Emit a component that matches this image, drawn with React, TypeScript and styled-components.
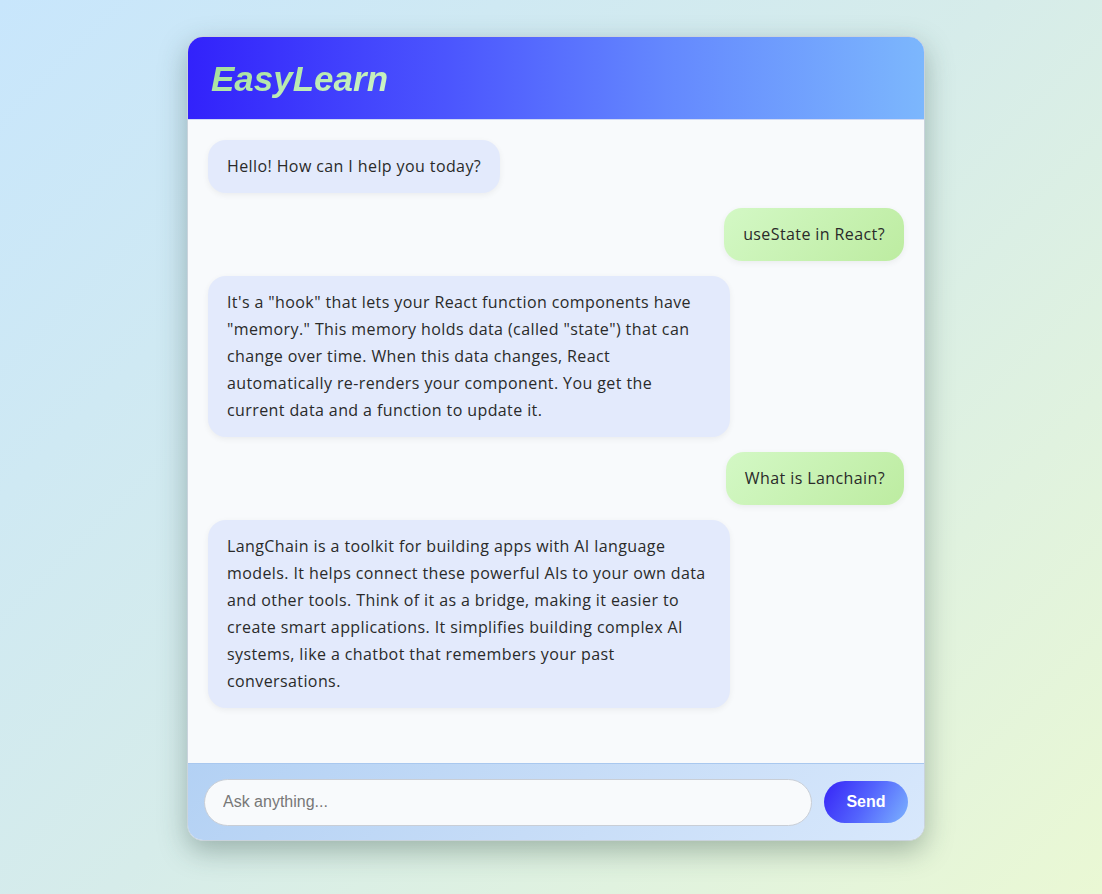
import React from 'react'
import styled, { createGlobalStyle } from 'styled-components'

type Message = { from: 'bot' | 'user'; text: string }

const messages: Message[] = [
    { from: 'bot', text: 'Hello! How can I help you today?' },
    { from: 'user', text: 'useState in React?' },
    {
        from: 'bot',
        text: 'It\'s a "hook" that lets your React function components have "memory." This memory holds data (called "state") that can change over time. When this data changes, React automatically re-renders your component. You get the current data and a function to update it.',
    },
    { from: 'user', text: 'What is Lanchain?' },
    {
        from: 'bot',
        text: 'LangChain is a toolkit for building apps with AI language models. It helps connect these powerful AIs to your own data and other tools. Think of it as a bridge, making it easier to create smart applications. It simplifies building complex AI systems, like a chatbot that remembers your past conversations.',
    },
]

const App: React.FC = () => {
    return (
        <>
            <GlobalStyle />
            <StPage>
                <StCard>
                    <StHeader>
                        <StTitle>EasyLearn</StTitle>
                    </StHeader>
                    <StChat>
                        {messages.map((m, i) => (
                            <StBubble key={i} $user={m.from === 'user'}>
                                {m.text}
                            </StBubble>
                        ))}
                    </StChat>
                    <StInputBar>
                        <StInput placeholder="Ask anything..." />
                        <StSend>Send</StSend>
                    </StInputBar>
                </StCard>
            </StPage>
        </>
    )
}

const GlobalStyle = createGlobalStyle`
    html, body {
        margin: 0;
        padding: 0;
    }
    body {
        font-family: 'Liberation Sans', Arial, sans-serif;
        min-height: 894px;
        background: linear-gradient(135deg, #c8e6fc 0%, #d6ecea 50%, #eaf8d4 100%);
    }
`

const StPage = styled.div`
    display: flex;
    justify-content: center;
    padding: 36px 0 53px 10px;
    min-height: 894px;
    box-sizing: border-box;
`

const StCard = styled.div`
    width: 738px;
    height: 805px;
    display: flex;
    flex-direction: column;
    border-radius: 16px;
    overflow: hidden;
    border: 1px solid #c9d3dc;
    box-sizing: border-box;
    background: #f8fafc;
    box-shadow: 0 10px 28px rgba(40, 70, 60, 0.35);
`

const StHeader = styled.div`
    height: 82px;
    flex-shrink: 0;
    display: flex;
    align-items: center;
    padding: 0 23px;
    background: linear-gradient(90deg, #3222fb 0%, #4b55fe 35%, #6488fe 65%, #7cb7fd 100%);
    border-bottom: 1px solid #cfd9f4;
`

const StTitle = styled.h1`
    margin: 0;
    font-family: 'Liberation Sans', Arial, sans-serif;
    font-size: 35px;
    font-weight: 700;
    font-style: italic;
    background: linear-gradient(160deg, #9fdc95 0%, #b9eab0 50%, #d2f4ca 100%);
    -webkit-background-clip: text;
    background-clip: text;
    color: transparent;
    padding-top: 2px;
`

const StChat = styled.div`
    flex: 1;
    display: flex;
    flex-direction: column;
    gap: 15px;
    padding: 20px 20px;
    overflow: hidden;
`

const StBubble = styled.div<{ $user?: boolean }>`
    max-width: 75%;
    box-sizing: border-box;
    align-self: ${(p) => (p.$user ? 'flex-end' : 'flex-start')};
    padding: 13px 19px;
    border-radius: 18px;
    font-family: 'Open Sans', 'Noto Sans', sans-serif;
    font-size: 16px;
    letter-spacing: 0.4px;
    line-height: 27px;
    color: #2a2a2a;
    background: ${(p) => (p.$user ? 'linear-gradient(135deg, #d3f8c5 0%, #bdeca1 100%)' : '#e3eafc')};
    box-shadow: 0 2px 6px rgba(0, 0, 0, 0.06);
`

const StInputBar = styled.div`
    height: 77px;
    flex-shrink: 0;
    box-sizing: border-box;
    display: flex;
    align-items: center;
    gap: 12px;
    padding: 0 16px;
    background: linear-gradient(135deg, #b3d1f4 0%, #c6dcf7 50%, #d8e8fc 100%);
    border-top: 1px solid #a9c8ef;
`

const StInput = styled.input`
    flex: 1;
    height: 47px;
    box-sizing: border-box;
    border-radius: 24px;
    border: 1px solid #c9ced6;
    background: #f8fafc;
    padding: 0 18px;
    font-family: 'Liberation Sans', Arial, sans-serif;
    font-size: 16px;
    color: #333;
    outline: none;
    &::placeholder {
        color: #777;
    }
`

const StSend = styled.button`
    width: 84px;
    height: 42px;
    border: none;
    border-radius: 21px;
    background: linear-gradient(120deg, #3624f7 0%, #5364fd 50%, #7cb3fe 100%);
    color: #fff;
    font-family: 'Liberation Sans', Arial, sans-serif;
    font-size: 16px;
    font-weight: 700;
    cursor: pointer;
`

export default App
